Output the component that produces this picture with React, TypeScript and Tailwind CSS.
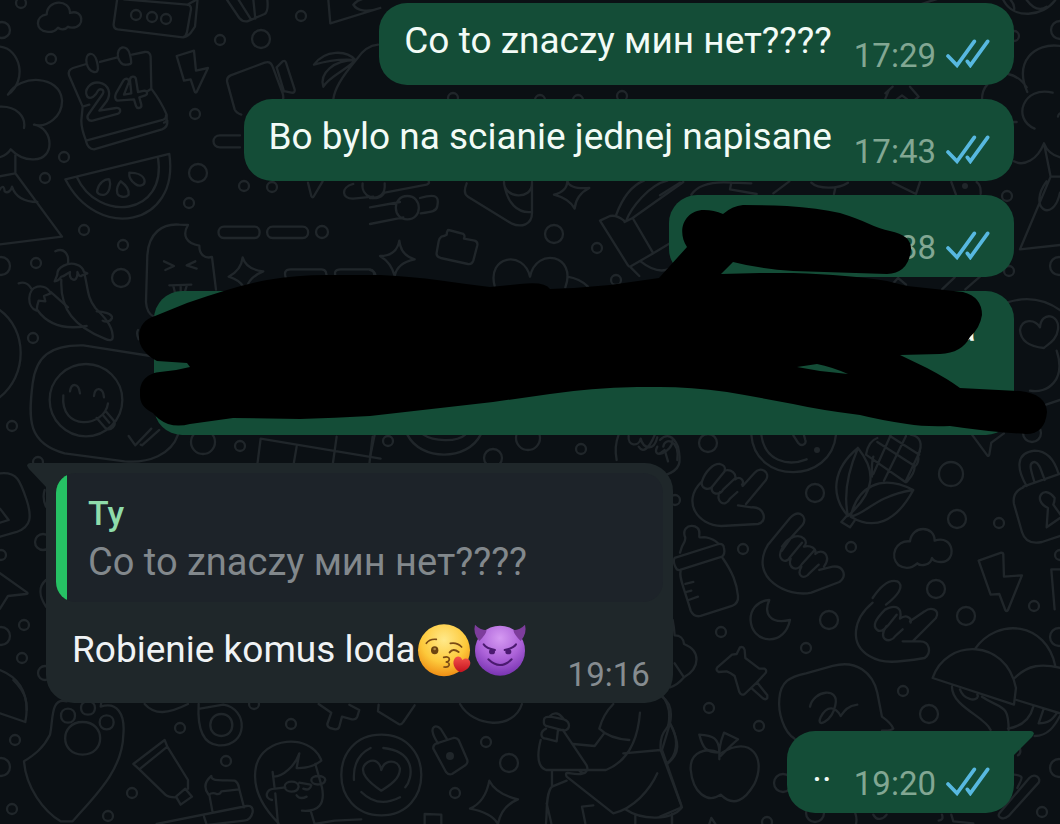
import type { ReactNode } from 'react'
import clsx from 'clsx'

// [cx, cy, r]
const rings: [number, number, number][] = [
  [21, 3, 5], [2, 30, 8], [51, 59, 5], [220, 40, 5], [261, 39, 9], [301, 16, 5], [195, 114, 5], [198, 173, 9],
  [64, 157, 5], [45, 178, 5], [189, 203, 5], [84, 230, 5], [123, 245, 5], [36, 263, 5], [1, 266, 9], [121, 278, 9],
  [244, 186, 5], [272, 187, 5], [322, 232, 6], [33, 338, 5], [12, 426, 5], [203, 442, 12], [240, 446, 5], [38, 462, 5],
  [136, 15, 5], [152, 17, 5], [166, 19, 5], [554, 234, 9], [597, 248, 5], [616, 280, 5], [388, 441, 5], [528, 438, 12],
  [493, 458, 9], [581, 449, 5], [708, 443, 9], [1007, 196, 5], [1009, 271, 5], [1059, 266, 9], [815, 493, 9],
  [951, 474, 12], [957, 519, 9], [999, 523, 5], [743, 549, 5], [851, 547, 5], [936, 589, 9], [675, 500, 5],
  [1032, 433, 9], [1034, 606, 5], [1060, 555, 5], [829, 620, 9], [966, 616, 9], [721, 632, 5], [806, 648, 5],
  [903, 691, 5], [929, 714, 9], [709, 708, 5], [759, 726, 5], [1059, 637, 9], [1042, 812, 5], [1059, 768, 9],
  [783, 783, 9], [767, 822, 5], [815, 813, 9], [15, 740, 5], [12, 809, 5], [1, 767, 9], [180, 728, 5], [226, 761, 5],
  [291, 724, 5], [132, 793, 5], [108, 816, 5], [254, 704, 5], [486, 742, 5], [509, 763, 9], [455, 793, 5],
  [24, 625, 5], [22, 658, 5], [1, 555, 5], [1, 636, 9], [43, 542, 8], [45, 673, 7], [1014, 36, 5], [1060, 30, 9],
  [453, 98, 5], [540, 100, 5], [578, 100, 5], [622, 96, 5],
]

// Doodles are drawn on a grid three times finer than the page
const doodles: { x: number; y: number; paths: string[] }[] = [
  {
    x: 0,
    y: 0,
    paths: [
      // cloud
      'M140 95c-34-4-36-46 0-52 2-46 70-46 70-4 40-14 48 44 6 44-8 0-12-3-12-3-8 10-22 10-30 3-10 12-24 14-34 12Z',
      // box
      'M352-6 341 72q-1 14 12 16l196 24q10 1 22-12l14-20 8-84M372-2l190 16q12 2 11 14l-12 68q-2 12-12 16M562 14l26-14',
      // basket
      'M680-2l38 56q10 12 24 10l52-22q12-8 8-44M715-2l38 60M760-2l6 58',
      // calendar
      'M248 320 207 226q-4-16 12-22l40-12M300 186l52-14M396 164l38-8q16-2 18 14l2 96M248 320l-4 42q0 24 14 60M454 266q30 40 46 78v16q-2 8-8 8M248 320l20-6M440 275l14-9',
      'M258 422l230-62q12-4 10-14M258 424q6 24 24 24l204-60q18-6 16-26',
      'M260 190c-6-34 22-38 30-8s2 36-8 34-18-8-22-26ZM354 172c-6-34 28-42 36-8s2 28-10 30-20-4-26-22Z',
      'M262 290c-12-22 10-46 36-42 30 6 36 34 22 56l-22 28 50-8c16-2 16 14 4 18l-74 20c-14 2-20-10-12-20l42-60c8-14-8-18-14-10-6 14-22 28-32 18Z',
      'M352 302c-8-4-8-12-4-22l22-38c6-10 20-6 16 6l-14 36 22-4-4-40c0-12 16-14 18-2l6 38 20-4c8 0 10 12 2 14l-18 6 6 22c2 10-12 14-16 4l-6-20Z',
      // bolt
      'M530 168l52-16 6 60 36-8-34 72q-4 4-6-2l-12-36-20 4Z',
      // mug
      'M724 344q-16-6-20-16l-22-80q-4-16 10-22l102-38q18-6 24 12l30 80q4 12 0 22M830 202l18-18q8-4 10 4l26 80q2 12-10 10l-18-4M830 202l22 72',
      // palm
      'M942 194c34-46 98-44 124-14-40-4-84 2-124 14ZM970 260c-12-40 30-80 96-80-20 26-80 50-96 80ZM1000 298c4-30 20-60 70-120 16-24 40-42 64-44',
      'M985-2l6 72 150-46M1060 14c10-12 30-20 50-20M1060 14c10 18 40 24 80 10',
      // bush
      'M0 140c60 6 84 100 24 144C60 220 180 226 186 300c2 50-46 84-84 74 60 10 64 104 0 104-28 2-48-8-70-30-10 16-20 20-34 24M0 320c50-2 78 30 72 64',
      'M46 466v54l140 190L-6 734M46 520l-52 10M-4 574c10-18 16-18 18 0 10 8 20-4 22-14 10 30 34 46 76 46',
      // watermelon
      'M196 538l312-76c32 218-216 264-312 76ZM230 530c64 140 272 118 244-58',
      'M292 570c4-20 22-34 36-32 6 16 0 42-14 46-12 2-26-2-22-14ZM362 544c14 10 26 26 24 40-10 12-30 6-34-4-4-12 2-28 10-36ZM388 518c20 0 44 6 46 26 0 14-18 16-28 8-12-8-20-20-18-34Z',
      // dashes
      'M720 406h-60c-26 0-26 36 0 36h60M672 680h92c20 0 20 34 0 34h-92c-22 0-22-34 0-34ZM818 680h90c22 0 22 34 0 34h-90c-22 0-22-34 0-34Z',
      'M924 548l10 40q4 8 8 0l26-44M1060 552c-40 10-34 46 0 44l60-6M1088 550c-6 40 44 60 64 30',
    ],
  },
  {
    x: 0,
    y: 190,
    paths: [
      // popsicle
      'M462 380q-22-10-24-44l4-140c4-68 46-96 96-92l26 1c-18 30-6 56 34 62 0 26 16 40 38 34l12 98',
      'M492 214l30 14-26 12M586 214l-26 12 30 10M508 286l66-2M520 288l6 24M542 288v20M560 288l-6 20',
      // sparkle
      'M728 202q10 36 62 42-40 16-50 48l-10-2q-12-20-44-30 38-20 42-58Z',
      'M860 270q-14-32 12-32h92q20 0 14 28M1010 266q-14-28 12-28h88q16 2 12 26',
      // peppers
      'M166 184c24-12 42 6 38 36M164 274l8-20c-2-22 34-40 58-30 12 4 20 14 22 22l10 4-16 6c-6 6-10 0-14-10 2 20-8 28-18 20-8-10-4-16-4-20-10 4-16 14-26 14-4 6-10 14-20 14ZM184 270c-4 90 40 140 130 176 16 8 26 6 24-10-2-30-24-54-52-82-24-30-22-60-32-100',
      'M56 280c18-6 30 2 38 16M110 362c-30-10-30-64 2-72 20-4 34 6 40 20l-20 8 4 16-20-2-4 14ZM112 360c30 42 80 60 148 48M152 306l52 46M290 364c20 0 48 8 46 20-6 14-22 12-28 8',
      // sticker
      'M452 498L250 466C150 464 108 500 98 580c-14 110-14 180 96 210l180 24c72 6 140-20 160-80',
      'M258 522c60 0 109 48 109 108s-49 109-109 109-109-49-109-109 49-108 109-108ZM190 616c-10 110 124 96 134 24M210 604c4-26 26-26 30 6M282 618c2-30 28-26 30 4M290 684l26 30c16 12 36-8 24-24l-24-28M308 674l20 24M386 738l20 28 48-50M422 764l4 2 52-46',
      'M-4 358c88 60 88 200 0 266M414 420q-6 10 2 28',
      'M770 840l12-94 360 60M890 770l-12 70M1010 740l-14 100M1118 740l-12 100',
    ],
  },
  {
    x: 370,
    y: 180,
    paths: [
      'M0 82l90-16M0 132l100-20M150 54c40-12 60-10 52 24-2 16-16 18-50 22M112 48c46 0 46 70 0 70s-46-70 0-70ZM44 38l126-24q10-4 6-10M0 54q48 2 44-44',
      'M290 10c-10 24-6 34 4 40l130 80c30 14 62 4 62-30V6M402 6c0 50 84 56 84 4M402 10c10 60 40 90 82 86',
      'M592 2q6 26 66 22-40 20-44 62-16-30-62-42 40-10 40-42ZM88 182q4 44 46 56-52 10-60 50-10-40-44-60 50 0 58-46Z',
      'M214 170q10-2 16-6 0-8 4-14 4 0 46 12 6 4 2 14l32 6q10 4 8 14l-12 46q-4 12-16 10l-82-18q-14-4-12-16l6-34q2-10 8-14Z',
      'M374 318c-24-90 86-110 106-28 20-92 142-64 106 32M592 290c26 4 46 14 62 30',
      'M738 106c20-54 48-90 84-104M768 124c14-40 70-110 124-122M690 122l30-14q20-4 42 14l2 4 24-12 62 106-70 40q-4 0-6-4ZM788 114L940 6M850 220l50-30M780 260l28 28M812 244q50 40 88 22',
      'M0 270q14 4 16 14M14 764L0 832M112 764c40 80 180 80 220 0M160 764c30 20 100 24 126 0',
      'M740 840q-8-40 6-76M776 768c-4 30 30 34 36 8 8 30 40 40 50-4M806 800q20 30 48-34M862 800c-20 40 46 18 46-20M880 800c4-30 50-20 42 40',
    ],
  },
  {
    x: 860,
    y: 0,
    paths: [
      'M430 0c30 60 120 50 156 0M452 0q14 16 10 30M500 0q30 40 60 20M184 12L260-12',
      'M502 276c-40-90 20-150 100-138M500 262q-20-32-56-40M524 386c-70-30-34-130 54-108M606 340q-10-2-12 10M366 300q0-30 16-46M462 366h8M462 484c30 16 70-4 90-54 10 26 30 40 60 44M552 430l20 100L480 748l130-14M560 544c-60 80 20 130 40 34M572 530h30',
      'M76 296l10-24M76 280l22-20M150 260l26 30-10 8M110 298l16-12 16 12',
      'M440 908c60-20 120-10 170 30M600 1200l-42 14M480 990c6-34 44-34 60-8 4-50 60-40 54 6-4 34-30 44-42 56-40-4-70-20-72-54ZM590 1052c30 90-30 130-80 120',
      'M98 548l70 34 12-36M274 546l14 38M350 546q14 10 12 36M246 868l38-36M316 868l44-38M100 850l14-16 24 20',
    ],
  },
  {
    x: 660,
    y: 180,
    paths: [
      'M0 46l60-38M94 44c20-30 60-40 120-36l60 2M214 8l-4 20 80 14M340 40l48-36M454 8c20 20 80 20 110 0M526 24l-4 18',
    ],
  },
  {
    x: 660,
    y: 420,
    paths: [
      // clock
      'M274 44c10 150 240 150 254 0M304 44c10 80 80 96 136 74M400 46l14 22c12 14 26 4 22-8l-4-14',
      // corn
      'M594 84c-74 60-86 140-30 204M594 84c56 70 52 130-30 204M594 84c-30 70-44 140-30 204M572 290c20-90 90-130 188-80-54 100-120 120-188 80ZM572 290c50-10 70-60 186-80M562 286l-18 20 26 16 14-20',
      'M618 104c4-24 16-44 34-50M618 104l118 82M652 66l112 72M640 162l52-116M672 182l66-134M736 186l44-92M690 48l88 56M752 44c30 4 38 30 22 60 4 20-2 30-10 36 0 20-14 34-24 46M640 110q-6 20-4 60',
      // hands
      'M124 186c-60 60-10 130 60 132l110-6c30-6 20-54-20-50l-40-6M258 252l60-72c14-24-16-42-34-22l-36 40M126 184c10-30 34-54 54-52 20 6 14 16 14 20 20-6 36 10 32 26 16-12 28 6 20 16M126 184c-6 20 20 32 34 12l34-42M156 200c-6 24 22 28 34 8l36-34M180 216c-16 26 14 50 30 20l22-20',
      'M324 374l66-80c30-30 54 0 38 20l-34 38-28 40M324 374c-60 100 60 160 130 144l84-32c26-20 10-50-20-46l-40 10M366 380c20-30 50-40 66-24 10 10 4 20 0 24 20-6 38 6 34 22 20-20 50 4 26 38M366 386c-18 30 10 50 24 26l36-44M392 416c-10 30 20 40 34 16l38-42M424 440c-16 30 10 40 24 20l28-26',
      // cloud and bolt
      'M716 436c-28-26-10-76 34-72 6-50 74-48 74-2 60-20 68 66 18 64-14 0-22-4-26-12-4 22-34 26-44 16-20 18-40 16-56 6Z',
      'M956 422l68-24q6 0 6 6l2 66 54-4-42 104q-4 6-8 0l-18-48-26 2Z',
      // lock
      'M1100 198c-30-50-34-100 24-106 40 0 60 30 72 70M1124 188c-12-40-20-60 0-62 14 4 18 20 30 54M1090 200l114-40M1090 202q-34 14-28 50l24 84q12 40 60 30l60-20M1160 322l4-58c-50-24-12-74 20-30 0 10-2 16-4 20l26 36ZM1206 448l-32 0 10 120',
      'M936 44l46 62q4 4 6-2l6-36 38-28',
      'M0 60c20-20 40-14 54 20 10 44 10 70-40 86M0 100l14-10 10 34',
      // bottle
      'M74 364c2-12 4-10 0-16-10-40 50-40 44-4-2 14 4 6 20 8 24 4 30 12 38 20M60 398q4-18 14-34M44 414l132-42q14-2 16 12 4 18-6 26L60 450q-10 2-14-10-8-18-2-26ZM62 454c-6 16 10 50 30 118q10 20 30 16l94-30q20-8 18-30c-4-40-16-70-46-114M76 492l24-6M80 516l14-4M86 540l28-10',
    ],
  },
  {
    x: 660,
    y: 600,
    paths: [
      // moon
      'M328 0c-80 6-70 116 0 118 30 0 54-20 62-58-60 14-80-20-62-60Z',
      // rock hand
      'M638 8c-60 50-70 124-10 160 40 24 80 20 166 6 20-14 18-50-14-50h-52M638-6q40-60 74-50c24 14 0 44-34 70M758 124l70-70c14-26-16-34-34-20l-44 30M674 30c34-20 54-6 46 26 20-16 36 0 32 12M676 28c-30 30-40 50-24 62 10 8 24-4 34-16l24-30M680 78c-30 40 10 56 26 30l22-20',
      // pin
      'M240 142q10-4 14 8l2 24 42 32 16 0q8 6 2 14l-26 28-36 34q-10 6-16-6l-14-48q-12-10-24-14l-24 2q-10-6-4-14l44-38 14-2ZM276 266l34 30q8 4 12-2v-8l-30-38',
      // speech bubble
      'M404 416c-34-20-50-80-46-120 4-50 30-66 80-76l80-22c70-20 120 20 134 80l14 72q28 20 34 36-10 8-34 6',
      'M450 320c10-50 90-60 76-4-10 50-60 70-44 36 20-40 46-30 60-4 10-14 20-30 50-34',
      // umbrellas
      'M818 234c40-120 220-120 250 30l-6 50ZM944 148c70-100 216-80 242 50M1064 234c40-40 80-44 140-30M1070 300l130 40M876 260c0 60 100 90 116 130M900 268c10 30 50 40 54 20l-2-4M966 290c60 40 80 20 80 100M1120 320c-10 40-40 60-76 66M1150 330l-14 40c30 0 40-10 54-30M1124 408c40 0 60-30 76-60',
      // apple
      'M180 460c-40-20-90-6-88 48 6 70 50 104 90 76 40 40 74 14 100-30 40-80-10-150-96-96M178 458c-40 0-50-14-60-54 40 2 60 10 60 54v20c0-30 0-44 14-80l42 20q-20 16-52 50',
      'M1062 524c34 4 24 10 10 40M1018 640l90-106c16-16 36 0 28 14l-90 100c-16 14-36 4-28-8ZM1074 466q10-6 6-20M586 640q6 16 2 32M640 644c10 20 30 14 40 0M846 644q6 16-10 18M874 644l6 20 60 6',
      // ice cream behind the message
      'M38 60q4 20 6 46c20 0 26 10 28 26 50 20 50 70 0 100q-20 24-42 30M44 190l28 42M6 290c30 20 30 50 24 80l-24 80 56 160q4 10-2 14L0 650M30 370c30 50 20 100-10 120M36 652v20M148 672l6-18 12 18',
    ],
  },
  {
    x: 0,
    y: 680,
    paths: [
      'M40 0c40 40 46 70 36 126L0 100M200 64c-50-14-40 60-50 100-20 40-46 60-78 80 6 80 60 150 110 180h36c60-70 150-150 152-260 6-64-20-100-68-84l2-14',
      'M204 86c28 0 28 42 0 42s-28-42 0-42ZM264 64c28 0 28 40 0 40s-28-40 0-40ZM320 106c28 0 28 42 0 42s-28-42 0-42ZM248 126c70 0 70 98 0 98s-70-98 0-98Z',
      'M400 252l94-72 8 20-84 68ZM502 200l62 100v26M418 268l78 76q8 8 30 8M528 350l28-24 20 24-34 24Z',
      'M596 72c-4 70 10 120 60 124 90 4 90-110 14-122l-70 12M664 102c44 0 44 66 0 66s-44-66 0-66ZM434 72c30 34 70 30 130 0',
      // cake
      'M626 344c-16-20-10-40 8-56 0 20 40 10 70 14 12 6 12 16 14 26l-54 6q-4 10-14 8-12-6-24 2ZM628 344l10 54M718 328l14 54M470 432l270-54c30-6 20 44-8 44L612 436M612 410l8 24',
      // girl
      'M836 430c-50-50-80-110-68-170 20-90 160-100 194-24l2 6q-30 24-74 22l8-44c-14 40-50 70-76 70M818 276l6 50M854 320c0-20 42-20 42 0-4 20-40 20-42 0ZM934 300c0-16 42-16 42 0-4 18-42 18-42 0ZM898 308l34 6M856 322l-30 4M826 326c-30 0-34 30-10 34M826 340l8 90M890 346q10 14 30 4M946 252l20 70c10 50-10 74-60 70M932 392l12 40 60-10 80-4M910 326q20 8 24-10',
      'M1144 164c160 0 160 242 0 242s-160-242 0-242ZM1144 332c-30-20-80-60-40-86 20-10 36 0 40 24 10-34 50-32 56-4 0 30-30 50-56 66ZM1062 300q-4-70 50-96M1150 204c100 10 90 90 66 118M1084 336q50 50 116 16',
      'M956 72l38 26-12 34q0 8 8 12l16 4q10 0 12-8l8-30 30 8q12 2 16-8l6-20-30-16M1136 74l-2 20 62 38q8 4 14-6l34-50',
    ],
  },
  {
    x: 380,
    y: 680,
    paths: [
      'M240 72c40 70 160 80 186 0M174 190c-40-60 4-60 14-34l12 20M170 190l50-16q10-2 16 6l26 60q2 10-6 16l-40 26q-10 4-18-6l-38-70q-2-10 10-16Z',
      'M328 302q20 40 86 56-50 20-60 74-20-34-84-46 46-20 58-84ZM134 432v-30l50 2v28',
      // figure
      'M492 124c-2-14 10-14 20-14l40 8c20 8 20 30 0 34l-54-14q-8-4-6-14ZM510 108q20-20 42 10M498 146c-20 10-16 30 0 30l32 8M530 184l4-34h16M550 152l70 104c8 20-10 32-24 14M482 180c-10 40-12 80 16 90h180c50-20 94-70 102-172M580 192l64 6 30-40M700 72q-30 30-42 74 30 30 90 34M730 220l112-10c-4-60 24-60 24-80q8-50-20-84M842 210l64 172c-30 40-120 40-170 6M610 280c-30 10-60-14-50 10l140 110c60-14 110-70 132-120M516 270v50l44-18M516 320c-20 20-14 80-18 110M500 370l14 60M640 376l-34 4 10 50M766 406v26M876 402v28M870 130c30 60 30 90-6 120',
    ],
  },
  {
    x: 0,
    y: 440,
    paths: [
      'M0 100c50-6 60 20 80 80 16 50 14 80-30 96L0 290M0 206l26 34-26 8M0 400l82 58q2 4-4 4L24 468 0 506M138 420c-24 20-20 50 0 80M0 690c60 24 80 70 80 120M134 150q-8 24 4 50',
    ],
  },
]

function Wallpaper() {
  return (
    <svg
      className="absolute inset-0 h-full w-full"
      viewBox="0 0 1060 824"
      preserveAspectRatio="xMinYMin slice"
      fill="none"
      stroke="#20262a"
      strokeLinecap="round"
      strokeLinejoin="round"
      aria-hidden="true"
    >
      {rings.map(([cx, cy, r]) => (
        <circle key={`${cx}-${cy}`} cx={cx} cy={cy} r={r} strokeWidth={2.3} />
      ))}
      {doodles.map(({ x, y, paths }) => (
        <g key={`${x}-${y}`} transform={`translate(${x} ${y}) scale(0.3333)`} strokeWidth={7}>
          {paths.map((d) => (
            <path key={d} d={d} />
          ))}
        </g>
      ))}
      <g fill="#20262a" stroke="none">
        <circle cx="817" cy="450" r="3" />
        <circle cx="965" cy="186" r="3" />
        <circle cx="450" cy="756" r="4" />
      </g>
    </svg>
  )
}

function ReadTicks() {
  return (
    <svg
      className="mb-1.5 h-[29px] w-11 shrink-0"
      viewBox="860 150 132 87"
      fill="none"
      stroke="#57b8e0"
      strokeWidth={11}
      role="img"
      aria-label="Przeczytano"
    >
      <path d="M866 201l27 28 52-72" strokeLinecap="round" />
      <path d="M924 217l9 12 52-72" strokeLinecap="round" />
    </svg>
  )
}

type SentProps = {
  time?: string
  tail?: boolean
  className?: string
  children?: ReactNode
}

function SentMessage({ time, tail, className, children }: SentProps) {
  return (
    <article
      className={clsx(
        'relative flex max-w-full justify-end gap-[22px] bg-[#144d37] pr-6 pl-[25px]',
        tail ? 'rounded-[28px] rounded-tr-none' : 'rounded-[28px]',
        className,
      )}
    >
      <p className="pt-3.5 pb-5 text-[37px] leading-[48px] text-[#f2fbf6]">{children}</p>
      {time && (
        <div className="flex items-center gap-2.5 self-end pb-[9px]">
          <time className="text-[33px] leading-10 text-[#82a793]">{time}</time>
          <ReadTicks />
        </div>
      )}
      {tail && (
        <svg className="absolute top-0 left-full h-6 w-5" viewBox="0 0 20 24" fill="#144d37" aria-hidden="true">
          <path d="M0 0h17q5 1 1 6L0 24Z" />
        </svg>
      )}
    </article>
  )
}

function KissEmoji() {
  return (
    <svg className="h-14 w-14 shrink-0" viewBox="228 547 168 168" role="img" aria-label="😘">
      <defs>
        <radialGradient id="kiss" cx="0.5" cy="0.3" r="0.72">
          <stop offset="0" stopColor="#ffe98a" />
          <stop offset="0.6" stopColor="#fdc93b" />
          <stop offset="1" stopColor="#ee8a12" />
        </radialGradient>
        <linearGradient id="heart" x1="0" y1="0" x2="0" y2="1">
          <stop offset="0" stopColor="#f4524a" />
          <stop offset="1" stopColor="#c4121f" />
        </linearGradient>
      </defs>
      <circle cx="312" cy="632" r="78" fill="url(#kiss)" />
      <g fill="none" stroke="#7a4a14" strokeWidth="5" strokeLinecap="round">
        <path d="M259 611q10-14 30-12" />
        <path d="M331 611q20-4 34 11" />
        <path d="M329 638q10-13 27-1" strokeWidth="6" />
        <path d="M311 653q17-4 17 6-1 8-11 8 13 1 10 10-3 7-15 5" />
      </g>
      <ellipse cx="284" cy="632" rx="11" ry="12" fill="#6b4310" />
      <circle cx="284" cy="628" r="4" fill="#b28a44" />
      <path
        d="M362 698c-16-6-26-24-20-38 6-13 20-12 25 1 8-9 23-5 24 8 0 14-13 24-29 29Z"
        fill="url(#heart)"
      />
    </svg>
  )
}

function DevilEmoji() {
  return (
    <svg className="h-14 w-14 shrink-0" viewBox="396 547 168 168" role="img" aria-label="😈">
      <defs>
        <radialGradient id="devil" cx="0.5" cy="0.25" r="0.78">
          <stop offset="0" stopColor="#d59af2" />
          <stop offset="0.55" stopColor="#ac62d8" />
          <stop offset="1" stopColor="#7430ae" />
        </radialGradient>
      </defs>
      <circle cx="480" cy="633" r="75" fill="url(#devil)" />
      <path d="M405 555q14 15 35 17-3 14-22 32-20-22-13-49Z" fill="#7d3d9c" />
      <path d="M555 555q-14 15-35 17 3 14 22 32 20-22 13-49Z" fill="#7d3d9c" />
      <g fill="none" stroke="#4b1a70" strokeWidth="6" strokeLinecap="round">
        <path d="M431 614q8 12 34 17" />
        <path d="M528 614q-8 12-34 17" />
        <path d="M445 659q35 34 70 0" />
      </g>
      <ellipse cx="456" cy="636" rx="9" ry="8" fill="#4b1a70" />
      <ellipse cx="505" cy="636" rx="9" ry="8" fill="#4b1a70" />
    </svg>
  )
}

function ReceivedMessage() {
  return (
    <article className="relative ml-[46px] max-w-[calc(100%-46px)] self-start rounded-[28px] rounded-tl-none bg-[#1f272a] px-2.5 pt-2.5">
      <svg className="absolute top-0 right-full h-6 w-5" viewBox="0 0 20 24" fill="#1f272a" aria-hidden="true">
        <path d="M20 0H4q-5 1-1 6l17 18Z" />
      </svg>

      {/* Quoted message */}
      <blockquote className="flex overflow-hidden rounded-[20px] bg-[#1d2329]">
        <span className="w-[11px] shrink-0 bg-[#26c164]" />
        <div className="pt-5 pr-5 pb-4 pl-[21px]">
          <p className="text-[34px] leading-10 font-medium text-[#8fdcab]">Ty</p>
          <p className="pt-[5px] text-[38px] leading-[48px] text-[#82888c]">Co to znaczy мин нет????</p>
        </div>
      </blockquote>

      <div className="flex justify-between gap-10 pt-5 pr-[13px] pl-4">
        <p className="flex items-center pb-[25px] text-[37px] leading-[48px] text-[#f0f3f5]">
          Robienie komus loda
          <KissEmoji />
          <DevilEmoji />
        </p>
        <time className="self-end pb-2 text-[33px] leading-10 text-[#868c90]">19:16</time>
      </div>
    </article>
  )
}

function Scribble() {
  return (
    <svg
      className="absolute top-0 -right-9 h-[242px] w-[912px] max-w-none"
      viewBox="138 195 912 242"
      aria-hidden="true"
    >
      <path
        fillRule="evenodd"
        d="M659 278L687 247C676 230 685 210 704 210Q714 210 723 214Q732 206 743 205Q765 205 787 206Q818 208 840 213Q856 218 867 223Q880 229 890 231Q911 235 911 249Q909 273 887 274L793 271Q760 269 733 262L721 274L760 273H793Q850 275 887 281L907 286L963 292Q982 297 982 315Q980 328 970 337Q962 353 940 354L900 355L927 368Q948 379 960 388L1020 391Q1046 394 1047 412Q1045 434 1026 434Q990 432 950 426Q925 427 907 424Q880 420 860 415Q820 410 793 404Q757 397 727 392Q690 387 660 387H637Q590 388 550 394L493 402L370 416Q335 418 300 419L233 418L190 424Q178 427 168 424Q158 420 153 413C140 406 140 400 140 392C140 379 150 373 160 372Q175 371 190 367L187 363L157 361C146 355 139 347 139 337C139 326 145 319 155 316L187 303Q207 296 227 290Q247 284 267 280Q297 275 327 275H380Q415 277 437 280Q465 284 490 287L520 284Q545 281 550 289Q580 288 610 285ZM797 367L817 364Q832 367 848 374L820 371Z"
      />
    </svg>
  )
}

export default function App() {
  return (
    <main className="relative min-h-screen overflow-hidden bg-[#0b1014] font-['Roboto',sans-serif]">
      <Wallpaper />

      <section className="relative flex flex-col gap-7 pt-[3px] pb-[11px]" aria-label="Czat">
        <div className="flex flex-col items-end gap-3.5 pr-[46px]">
          <SentMessage time="17:29">Co to znaczy мин нет????</SentMessage>
          <SentMessage time="17:43">Bo bylo na scianie jednej napisane</SentMessage>

          {/* Crossed out messages */}
          <div className="relative flex w-full flex-col items-end gap-3.5">
            <SentMessage time="38" className="min-h-[82px] w-[345px]" />
            <SentMessage className="min-h-36 w-[860px] pr-[38px]">a</SentMessage>
            <Scribble />
          </div>
        </div>

        <ReceivedMessage />

        <div className="flex justify-end pr-[46px]">
          <SentMessage time="19:20" tail>
            ..
          </SentMessage>
        </div>
      </section>
    </main>
  )
}
